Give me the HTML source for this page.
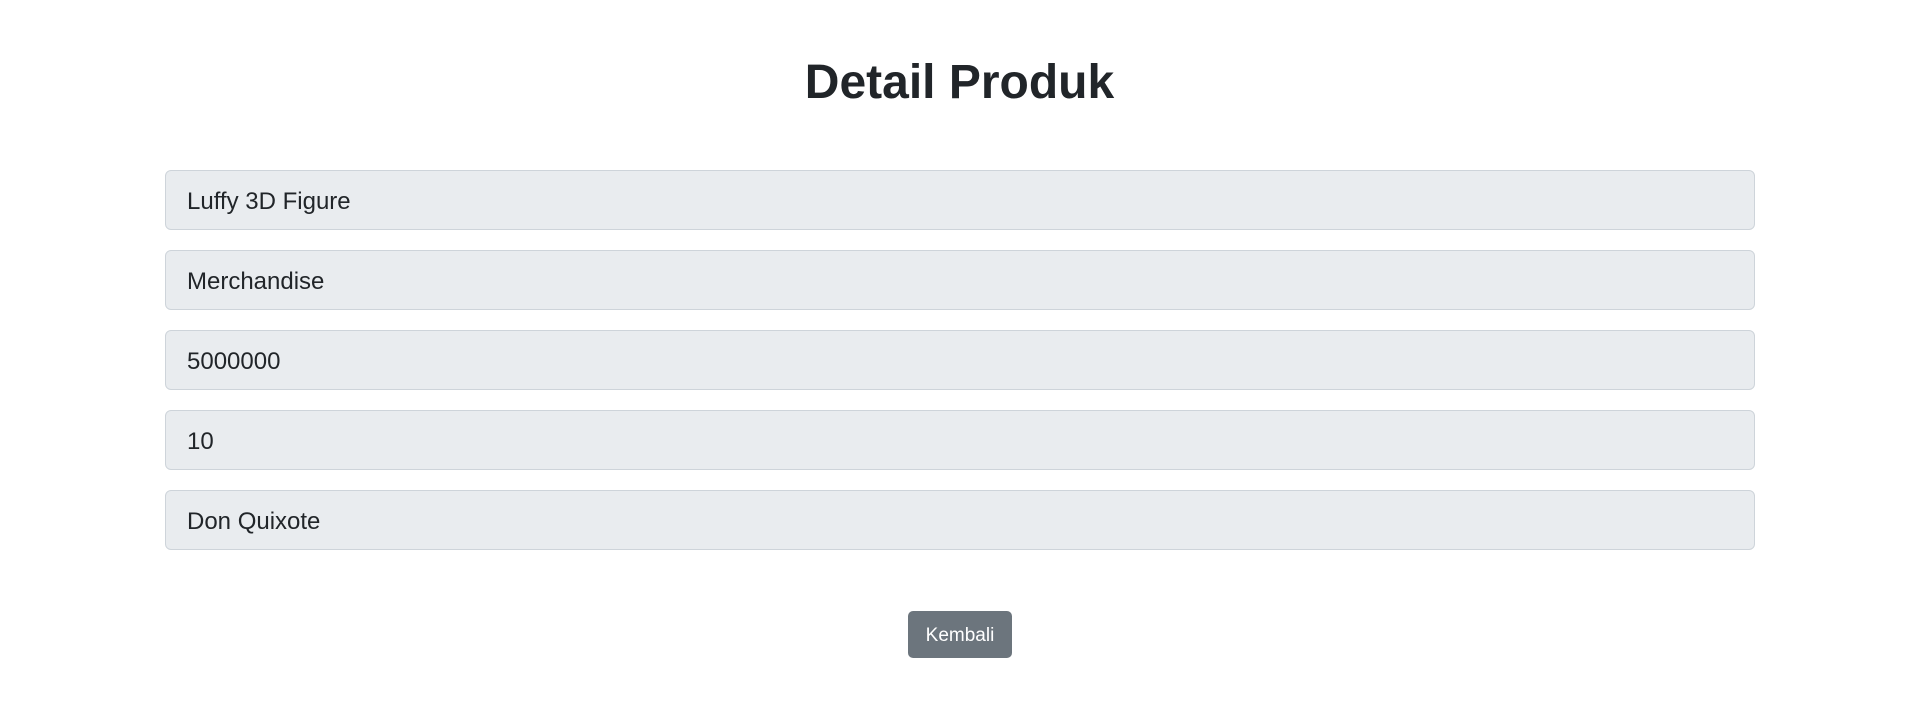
<!DOCTYPE html>
<html><head><style>
body{margin:0;width:1919px;height:723px;background:#fff;font-family:"Liberation Sans",sans-serif;color:#212529;position:relative;overflow:hidden}
h1{position:absolute;top:51px;left:0;width:1919px;text-align:center;margin:0;font-size:48px;font-weight:bold;line-height:64px}
.in{position:absolute;left:165px;width:1567px;height:58px;background:#e9ecef;border:1px solid #ced4da;border-radius:6px;font-size:24px;line-height:62px;padding-left:21px;box-sizing:content-box}
.btn{position:absolute;left:908px;top:611px;width:104px;height:47px;background:#6c757d;color:#fff;border-radius:5px;font-size:19px;line-height:49px;text-align:center}
</style></head><body>
<h1>Detail Produk</h1>
<div class="in" style="top:170px">Luffy 3D Figure</div>
<div class="in" style="top:250px">Merchandise</div>
<div class="in" style="top:330px">5000000</div>
<div class="in" style="top:410px">10</div>
<div class="in" style="top:490px">Don Quixote</div>
<div class="btn">Kembali</div>
</body></html>
